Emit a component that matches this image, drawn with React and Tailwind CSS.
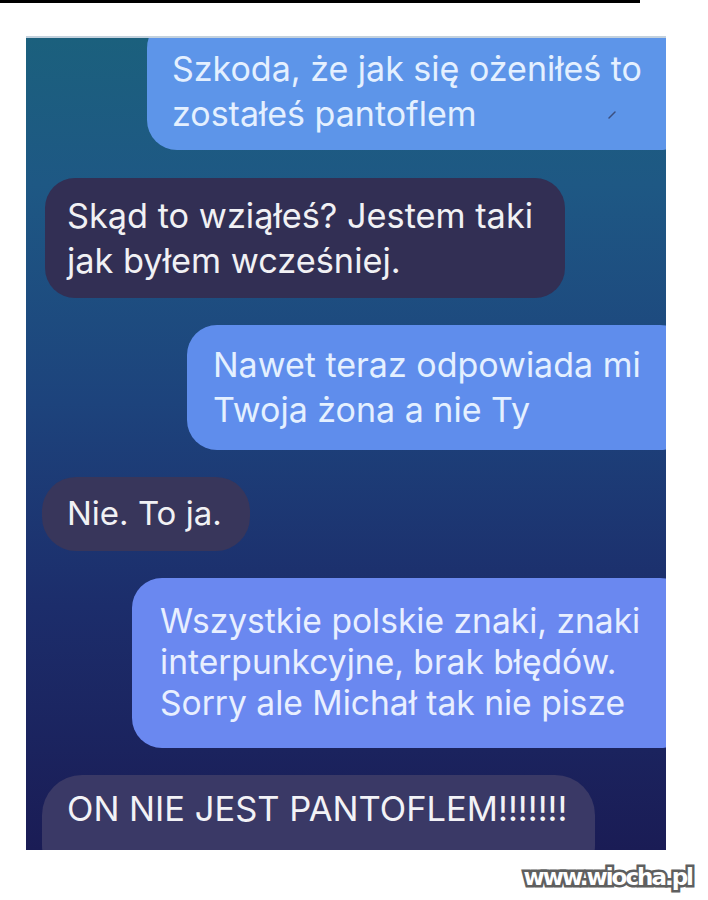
import React from "react";

const sent = "bg-[#5d95e9] text-[#e4f0ff]";
const recv = "bg-[#322f54] text-[#f1f1f4]";

const App = () => {
    return (
        <div className="min-h-[900px] w-[708px] bg-white font-['Inter','Liberation_Sans',sans-serif]">
            <div className="h-[3px] w-[640px] bg-black" />

            <div className="ml-[26px] mt-[33px] flex h-[814px] w-[640px] flex-col overflow-hidden border-t-2 border-[#c3d1dd] bg-[linear-gradient(180deg,#1b607d_0%,#1e5884_18%,#1d437c_45%,#1c2d6b_70%,#1a1c55_100%)]">
                {/* first sent bubble, top cut by the frame */}
                <div className={`relative ml-[121px] mr-[-24px] mt-[-20px] shrink-0 rounded-[30px] pb-[14px] pl-[25px] pt-[28px] text-[34px] leading-[45px] whitespace-nowrap ${sent}`}>
                    Szkoda, że jak się ożeniłeś to
                    <br />
                    zostałeś pantoflem
                    <svg className="absolute left-[460px] top-[92px]" width="10" height="10" viewBox="0 0 10 10">
                        <path d="M2 8 L8 2" stroke="#3b4f80" strokeWidth="1.5" strokeLinecap="round" />
                    </svg>
                </div>

                <div className={`ml-[19px] mt-[28px] w-[520px] shrink-0 rounded-[30px] py-[15px] pl-[22px] text-[34.3px] leading-[45px] whitespace-nowrap ${recv}`}>
                    Skąd to wziąłeś? Jestem taki
                    <br />
                    jak byłem wcześniej.
                </div>

                <div className="ml-[161px] mr-[-24px] mt-[27px] shrink-0 rounded-[30px] pb-[18px] pl-[26px] pt-[17px] text-[34px] leading-[45px] whitespace-nowrap bg-[#5f8dec] text-[#e4f0ff]">
                    Nawet teraz odpowiada mi
                    <br />
                    Twoja żona a nie Ty
                </div>

                <div className="ml-[16px] mt-[27px] flex h-[74px] w-[208px] shrink-0 items-center rounded-[34px] bg-[#38365b] pl-[25px] text-[33px] text-[#f1f1f4] whitespace-nowrap">
                    Nie. To ja.
                </div>

                <div className="ml-[106px] mr-[-24px] mt-[27px] shrink-0 rounded-[30px] pb-[25px] pl-[28px] pt-[22px] text-[33.6px] leading-[41px] whitespace-nowrap bg-[#6a88f0] text-[#e8efff]">
                    Wszystkie polskie znaki, znaki
                    <br />
                    interpunkcyjne, brak błędów.
                    <br />
                    Sorry ale Michał tak nie pisze
                </div>

                <div className="ml-[16px] mt-[27px] h-[110px] w-[553px] shrink-0 rounded-[40px] bg-[#3a3966] pl-[25px] pt-[11px] text-[34.5px] leading-[45px] text-[#f2f2f6] whitespace-nowrap">
                    ON NIE JEST PANTOFLEM!!!!!!!
                </div>
            </div>

            <div className="mt-[14px] flex justify-end pr-[16px]">
                <span className="font-['DejaVu_Sans',sans-serif] text-[23px] font-bold leading-[26px] tracking-[-2px] text-white [-webkit-text-stroke:5px_#5f5f5f] [paint-order:stroke_fill]">
                    www.wiocha.pl
                </span>
            </div>
        </div>
    );
};

export default App;
